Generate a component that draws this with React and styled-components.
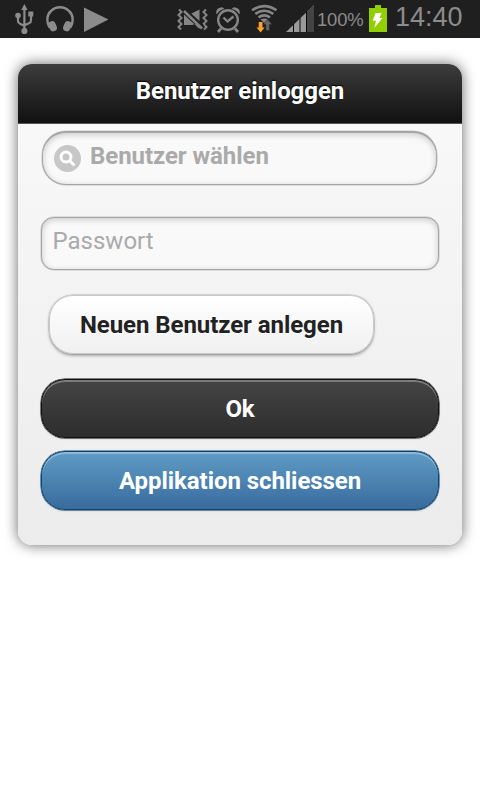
import React from "react";
import styled, { createGlobalStyle, css } from "styled-components";

const GlobalStyle = createGlobalStyle`
  * { box-sizing: border-box; }
  body { margin: 0; background: #fff; font-family: Roboto, "Liberation Sans", sans-serif; }
`;

const Screen = styled.div`
  width: 480px;
  height: 800px;
  overflow: hidden;
  background: #fff;
`;

const StatusBar = styled.header`
  display: flex;
  justify-content: space-between;
  height: 38px;
  padding: 0 17px 0 14px;
  background: #1f1f1f;
  color: #8c8c8c;
  font-family: "Liberation Sans", sans-serif;
`;

const StatusGroup = styled.div`
  display: flex;
  gap: ${(p) => p.$gap}px;
`;

const Icon = styled.svg`
  display: block;
  flex: none;
  height: 38px;
  width: ${(p) => p.$width}px;
  margin-left: ${(p) => p.$shift || 0}px;
`;

const Percent = styled.span`
  flex: none;
  width: 44px;
  margin-left: -5px;
  font-size: 18.4px;
  line-height: 40px;
  letter-spacing: -0.15px;
  white-space: nowrap;
`;

const Clock = styled.span`
  flex: none;
  width: 68px;
  font-size: 27px;
  line-height: 35px;
  white-space: nowrap;
`;

const Dialog = styled.main`
  width: 444px;
  height: 481px;
  margin: 26px 18px 0;
  border-radius: 14px;
  background: linear-gradient(#fafafa, #ececec);
  box-shadow: 0 0 14px rgba(0, 0, 0, 0.6);
`;

const TitleBar = styled.h1`
  margin: 0;
  height: 60px;
  padding-top: 1px;
  border-bottom: 1px solid #555;
  border-radius: 14px 14px 0 0;
  background: linear-gradient(#3c3c3c, #111);
  color: #fff;
  font-size: 24px;
  font-weight: 700;
  line-height: 53px;
  letter-spacing: -0.06px;
  text-align: center;
  text-shadow: 0 -1.5px 1.5px #000;
`;

const Form = styled.div`
  display: flex;
  flex-direction: column;
  align-items: flex-start;
  padding: 7px 22px 0 23px;
`;

const fieldBase = css`
  border: 1px solid #a6a6a6;
  background: #f9f9f9;
  color: #aaa;
  font-size: 24px;
  box-shadow: inset 0 1.5px 6px rgba(0, 0, 0, 0.2), 0 0 0 0.5px rgba(150, 150, 150, 0.5);
`;

const UserPicker = styled.div`
  ${fieldBase}
  display: flex;
  align-items: center;
  gap: 9px;
  width: 395px;
  height: 54px;
  margin-left: 1px;
  padding: 0 0 1px 11px;
  border-top-width: 2px;
  border-radius: 24px;
  font-weight: 700;
  letter-spacing: -0.06px;
`;

const PickerLabel = styled.span`
  padding-bottom: 5px;
`;

const SearchIcon = styled.svg`
  display: block;
  width: 27px;
  height: 27px;
`;

const PasswordField = styled.input`
  ${fieldBase}
  width: 398px;
  height: 53px;
  margin: 32px 0 1px;
  padding: 0 10px 6px 10.5px;
  border-radius: 13px;
  font-family: inherit;
  outline: none;
  &::placeholder { color: #aaa; opacity: 1; }
`;

const tones = {
  light: css`
    border-color: #c8c8c8;
    background: linear-gradient(#fff, #f0f0f0);
    color: #222;
    text-shadow: 0 1px 1px #fff;
    box-shadow: 0 1.5px 3px rgba(0, 0, 0, 0.3), 0 0 0 0.5px #c8c8c8;
  `,
  dark: css`
    border-color: #111;
    background: linear-gradient(#444, #2d2d2d);
    color: #fff;
    box-shadow: inset 0 2px 0 rgba(255, 255, 255, 0.3), 0 0 0 0.5px #111, 0 1px 2px rgba(0, 0, 0, 0.2);
  `,
  blue: css`
    border-color: #0b456f;
    background: linear-gradient(#5f9cc5, #396b9e);
    color: #fff;
    box-shadow: inset 0 2px 0 rgba(255, 255, 255, 0.3), 0 0 0 0.5px #0b456f, 0 1px 2px rgba(0, 0, 0, 0.2);
  `,
};

const Button = styled.button`
  width: 398px;
  height: 59px;
  margin: ${(p) => p.$gap}px 0 1px;
  padding: 1px 0 0;
  border: 1px solid;
  border-radius: 24px;
  font-family: inherit;
  font-size: 24px;
  font-weight: 700;
  letter-spacing: -0.06px;
  ${(p) => tones[p.$tone]}
`;

const CompactButton = styled(Button)`
  width: 325px;
  margin-left: 8px;
`;

export default function App() {
  return (
    <>
      <GlobalStyle />
      <Screen>
        <StatusBar>
          <StatusGroup $gap={11}>
            <Icon $width={21} viewBox="14 0 21 38" fill="#8c8c8c">
              <path d="M24.4 4l3.2 6h-6.4z" />
              <path d="M24.4 9v20M18 17v4q0 2 2 2.7l4.4 2M31 15v5.500q0 2-2 2.700l-4.600 2" fill="none" stroke="#8c8c8c" strokeWidth="2.2" />
              <circle cx="18" cy="15.500" r="2.800" />
              <path d="M28.300 11.500h5v5h-5z" />
              <circle cx="24.400" cy="31" r="3.100" />
            </Icon>
            <Icon $width={28} viewBox="46 0 28 38">
              <path d="M49.500 27.500C46 21 47 14.500 51 11c5-5 13-5 18 0c4 3.500 5 10 1.500 16.500" fill="none" stroke="#8c8c8c" strokeWidth="2.400" />
              <path d="M52 24.800l1.200 2.900M68 24.800l-1.200 2.900" stroke="#8c8c8c" strokeWidth="7.4" strokeLinecap="round" />
            </Icon>
            <Icon $width={24} $shift={-1} viewBox="84 0 24 38">
              <path d="M84 7.500l24.500 12-24.500 12.500z" fill="#8c8c8c" />
            </Icon>
          </StatusGroup>
          <StatusGroup $gap={8}>
            <Icon $width={32} viewBox="177 0 32 38" fill="none" stroke="#858585">
              <path d="M179 9.500l2.500 2.500-3 3 3 3-3 3 3 3-3 3 2.500 2.500M206 9.500l-2.500 2.500 3 3-3 3 3 3-3 3 3 3-2.500 2.500" strokeWidth="2" />
              <path d="M184 14.500l9.500 9v1.500h-9.500zM189.500 14.500l10-5v14.500z" fill="#858585" stroke="none" />
              <path d="M184.500 22.500h8l7 6.500v-4" fill="#858585" stroke="none" />
              <path d="M186 11l17 15.500" stroke="#1f1f1f" strokeWidth="3.2" />
              <path d="M184 11l18 17.500" strokeWidth="2.500" />
            </Icon>
            <Icon $width={24} $shift={-1} viewBox="216 0 24 38" fill="none" stroke="#858585">
              <circle cx="228" cy="20" r="9.800" strokeWidth="2.400" />
              <path d="M223.500 17.500l4 4 6-5" strokeWidth="2.400" />
              <path d="M221 28.500l-3 3.500M235 28.500l3 3.500" strokeWidth="2.700" />
              <path d="M216.300 14q-1-6.500 6-6.700l2 1.500q-5 1.500-7.300 5.200zM239.700 14q1-6.500-6-6.700l-2 1.500q5 1.500 7.300 5.200z" fill="#858585" stroke="none" />
            </Icon>
            <Icon $width={28} $shift={2} viewBox="250 0 28 38" fill="none" stroke="#858585">
              <path d="M252 10.300q12.200-8.400 24.500 0M255.300 13.800q9-6 18 0M258.500 17.300q5.700-3.800 11.500 0" strokeWidth="2.600" />
              <path d="M260.500 19.500q3.700-2.200 7.400 0l-3.700 3.400z" fill="#858585" stroke="none" />
              <path d="M267.700 19.500l4.300 5h-2.600v6h-3.500v-6h-2.600z" fill="#666" stroke="#1f1f1f" strokeWidth=".4" />
              <path d="M258.700 22h3.800v5.500h2.200l-4.100 5-4.100-5h2.200z" fill="#f9a12c" stroke="none" />
            </Icon>
            <Icon $width={28} viewBox="286 0 28 38">
              <path d="M286 32l28-27v27z" fill="#999" />
              <path d="M307 11.700l7-6.700v27h-7z" fill="#444" />
              <path d="M293.500 24v8M300 18v14M306.500 11v21" stroke="#080808" strokeWidth="1" />
            </Icon>
            <Percent>100%</Percent>
            <Icon $width={18} viewBox="369 0 18 38">
              <path d="M369 8h6V5h6v3h6v24h-18z" fill="#91cf00" />
              <path d="M375.500 13h6l-2 5h3l-8.200 10 1.700-7.300h-3.200z" fill="#fff" />
            </Icon>
            <Clock>14:40</Clock>
          </StatusGroup>
        </StatusBar>
        <Dialog>
          <TitleBar>Benutzer einloggen</TitleBar>
          <Form>
            <UserPicker>
              <SearchIcon viewBox="0 0 27 27">
                <circle cx="13.500" cy="13.500" r="13.500" fill="#c7c7c7" />
                <circle cx="12" cy="12" r="5" fill="none" stroke="#fff" strokeWidth="3" />
                <path d="M15.700 15.700l4.800 4.800" stroke="#fff" strokeWidth="3" />
              </SearchIcon>
              <PickerLabel>Benutzer wählen</PickerLabel>
            </UserPicker>
            <PasswordField type="password" placeholder="Passwort" />
            <CompactButton $tone="light" $gap={24}>Neuen Benutzer anlegen</CompactButton>
            <Button $tone="dark" $gap={24}>Ok</Button>
            <Button $tone="blue" $gap={12}>Applikation schliessen</Button>
          </Form>
        </Dialog>
      </Screen>
    </>
  );
}
